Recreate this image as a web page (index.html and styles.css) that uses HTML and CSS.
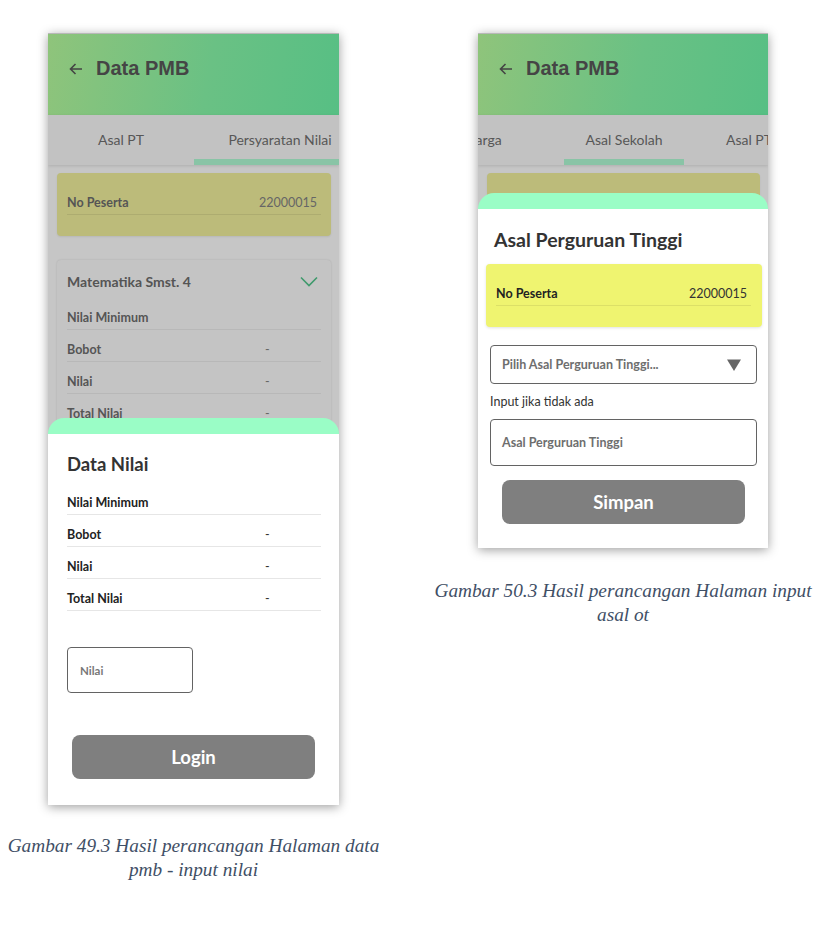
FILE: index.html
```html
<!DOCTYPE html>
<html lang="id">
<head>
<meta charset="utf-8">
<title>Data PMB</title>
<link rel="stylesheet" href="styles.css">
</head>
<body>
<div class="page">
  <div class="column column-left">
    <div class="phone phone-left">
      <div class="appbar">
        <svg class="back" width="14" height="12" viewBox="0 0 14 12"><path d="M13 6H1.5M6.5 1L1.5 6l5 5" fill="none" stroke="#444" stroke-width="1.6"/></svg>
        <span class="appbar-title">Data PMB</span>
      </div>
      <div class="tabs">
        <div class="tab tab-asalpt">Asal PT</div>
        <div class="tab tab-nilai active">Persyaratan Nilai</div>
      </div>
      <div class="content">
        <div class="card card-yellow dim">
          <div class="row"><span class="label">No Peserta</span><span class="value">22000015</span></div>
        </div>
        <div class="card card-grade">
          <div class="grade-head">
            <span class="grade-title">Matematika Smst. 4</span>
            <svg width="18" height="11" viewBox="0 0 18 11"><path d="M1 1.5l8 8 8-8" fill="none" stroke="#3f9a6c" stroke-width="1.6"/></svg>
          </div>
          <div class="row"><span class="label">Nilai Minimum</span></div>
          <div class="row"><span class="label">Bobot</span><span class="dash">-</span></div>
          <div class="row"><span class="label">Nilai</span><span class="dash">-</span></div>
          <div class="row"><span class="label">Total Nilai</span><span class="dash">-</span></div>
        </div>
      </div>
      <div class="sheet sheet-left">
        <div class="sheet-body sheet-body-left">
          <div class="sheet-title">Data Nilai</div>
          <div class="row"><span class="label">Nilai Minimum</span></div>
          <div class="row"><span class="label">Bobot</span><span class="dash">-</span></div>
          <div class="row"><span class="label">Nilai</span><span class="dash">-</span></div>
          <div class="row"><span class="label">Total Nilai</span><span class="dash">-</span></div>
          <div class="field field-nilai">Nilai</div>
          <div class="button button-login">Login</div>
        </div>
      </div>
    </div>
    <p class="caption caption-left">Gambar 49.3 Hasil perancangan Halaman data<br>pmb - input nilai</p>
  </div>

  <div class="column column-right">
    <div class="phone phone-right">
      <div class="appbar">
        <svg class="back" width="14" height="12" viewBox="0 0 14 12"><path d="M13 6H1.5M6.5 1L1.5 6l5 5" fill="none" stroke="#444" stroke-width="1.6"/></svg>
        <span class="appbar-title">Data PMB</span>
      </div>
      <div class="tabs tabs-scrolled">
        <div class="tab tab-keluarga">Keluarga</div>
        <div class="tab tab-sekolah active">Asal Sekolah</div>
        <div class="tab tab-pt">Asal PT</div>
      </div>
      <div class="content">
        <div class="card card-yellow dim">
          <div class="row"><span class="label">No Peserta</span><span class="value">22000015</span></div>
        </div>
      </div>
      <div class="sheet sheet-right">
        <div class="sheet-body sheet-body-right">
          <div class="sheet-title sheet-title-right">Asal Perguruan Tinggi</div>
          <div class="card card-yellow bright">
            <div class="row"><span class="label">No Peserta</span><span class="value">22000015</span></div>
          </div>
          <div class="field field-select">
            <span>Pilih Asal Perguruan Tinggi...</span>
            <svg class="caret" width="14" height="12" viewBox="0 0 14 12"><path d="M0 0.5h14L7 12z" fill="#666"/></svg>
          </div>
          <div class="hint">Input jika tidak ada</div>
          <div class="field field-text">Asal Perguruan Tinggi</div>
          <div class="button button-simpan">Simpan</div>
        </div>
      </div>
    </div>
    <p class="caption caption-right">Gambar 50.3 Hasil perancangan Halaman input<br>asal ot</p>
  </div>
</div>
</body>
</html>
```

FILE: styles.css
```css
* { box-sizing: border-box; }

body {
  margin: 0;
  background: #ffffff;
  font-family: Lato, "Open Sans", sans-serif;
}

.page {
  display: flex;
  align-items: flex-start;
  padding: 33px 0 0 48px;
  gap: 139px;
}

.column {
  display: flex;
  flex-direction: column;
  align-items: center;
}
.column-left { width: 291px; }
.column-right { width: 290px; }

.phone {
  position: relative;
  overflow: hidden;
  background: #c6c6c6;
  border-top: 1px solid #b8b8b8;
  box-shadow: 0 2px 10px rgba(0, 0, 0, 0.38);
}
.phone-left { width: 291px; height: 772px; }
.phone-right { width: 290px; height: 515px; }

.appbar {
  height: 81px;
  display: flex;
  align-items: center;
  gap: 13px;
  padding: 0 0 12px 21px;
  background: linear-gradient(100deg, #8fc47b 0%, #6ac184 55%, #57bf84 100%);
}
.back { flex: none; }
.appbar-title {
  font-family: "Liberation Sans", Arial, sans-serif;
  font-weight: 700;
  font-size: 20px;
  color: #454545;
}

.tabs {
  height: 50px;
  display: flex;
  overflow: hidden;
  background: #c2c2c2;
  box-shadow: 0 1px 3px rgba(0, 0, 0, 0.12);
  position: relative;
}
.tab {
  flex: none;
  display: flex;
  align-items: center;
  justify-content: center;
  font-size: 14px;
  color: #575757;
  padding-bottom: 2px;
}
.tab.active { box-shadow: inset 0 -6px 0 #89c4a6; }
.tab-asalpt { width: 146px; }
.tab-nilai { width: 172px; }
.tab-keluarga { width: 178px; margin-left: -92px; }
.tab-sekolah { width: 120px; }
.tab-pt { width: 120px; padding-left: 10px; }

.content {
  display: flex;
  flex-direction: column;
  gap: 24px;
  padding: 8px 8px 0 9px;
}

.card { border-radius: 4px; }
.card-yellow { padding: 10px 10px 21px; }
.card-yellow.dim { background: #bcbb7a; box-shadow: 0 1px 2px rgba(0,0,0,0.08); }
.card-yellow.bright { background: #eff470; box-shadow: 0 1px 3px rgba(0,0,0,0.12); padding: 10px 11px 21px 10px; }

.card-grade {
  background: #c4c4c4;
  box-shadow: 0 0 2px rgba(0, 0, 0, 0.15);
  padding: 11px 10px 20px;
}
.grade-head {
  display: flex;
  justify-content: space-between;
  align-items: center;
  height: 20px;
  margin-bottom: 7px;
  padding-right: 3px;
}
.grade-title {
  font-weight: 700;
  font-size: 14px;
  color: #555;
}

.row {
  display: flex;
  justify-content: space-between;
  align-items: center;
  height: 32px;
  padding-top: 12px;
  padding-bottom: 3px;
  line-height: 16px;
  border-bottom: 1px solid rgba(0, 0, 0, 0.08);
  font-size: 12.5px;
}
.label { font-weight: 700; }
.value { font-weight: 400; padding-right: 4px; }
.dash { width: 56px; text-align: left; }

.dim .label, .card-grade .label { color: #555; }
.dim .value, .card-grade .dash { color: #666; }
.card-grade .row { border-bottom-color: rgba(0,0,0,0.06); }

.sheet {
  position: absolute;
  left: 0;
  right: 0;
  bottom: 0;
  padding-top: 16px;
  background: #9afdc6;
  border-radius: 16px 16px 0 0;
}
.sheet-left { top: 384px; }
.sheet-right { top: 159px; }

.sheet-body {
  background: #ffffff;
  height: 100%;
}
.sheet-body-left { padding: 18px 18px 0 19px; }
.sheet-body-right { padding: 19px 6px 0 8px; }

.sheet-title {
  font-weight: 700;
  font-size: 18.5px;
  line-height: 24px;
  color: #333;
  margin-bottom: 7px;
}
.sheet-title-right { padding-left: 8px; margin-bottom: 12px; font-size: 19.5px; }

.sheet .row .label { color: #222; }
.sheet .row .value, .sheet .row .dash { color: #333; }
.sheet-body-left .row { border-bottom-color: #e6e6e6; }
.card-yellow.bright .row { border-bottom-color: rgba(0,0,0,0.08); }

.field {
  display: flex;
  align-items: center;
  border: 1.5px solid #636363;
  border-radius: 4px;
  font-size: 12.5px;
  font-weight: 700;
  color: #6e6e6e;
}
.field-nilai {
  width: 126px;
  height: 46px;
  margin-top: 36px;
  padding-left: 12px;
  font-size: 11.5px;
  color: #777;
}
.field-select {
  justify-content: space-between;
  height: 39px;
  margin: 18px 5px 0 4px;
  padding: 0 15px 0 11px;
}
.caret { flex: none; }
.hint {
  margin: 10px 0 0 4px;
  font-size: 12.5px;
  line-height: 16px;
  color: #333;
}
.field-text {
  height: 47px;
  margin: 9px 5px 0 4px;
  padding-left: 11px;
}

.button {
  display: flex;
  align-items: center;
  justify-content: center;
  height: 44px;
  background: #7f7f7f;
  border-radius: 8px;
  color: #ffffff;
  font-weight: 700;
  font-size: 18.5px;
}
.button-login { margin: 42px 6px 0 5px; }
.button-simpan { margin: 14px 17px 0 16px; }

.caption {
  margin: 0;
  white-space: nowrap;
  text-align: center;
  font-family: "Liberation Serif", "Times New Roman", serif;
  font-style: italic;
  font-size: 19.3px;
  line-height: 24px;
  color: #3f4f66;
}
.caption-left { margin-top: 29px; }
.caption-right { margin-top: 31px; }
```
